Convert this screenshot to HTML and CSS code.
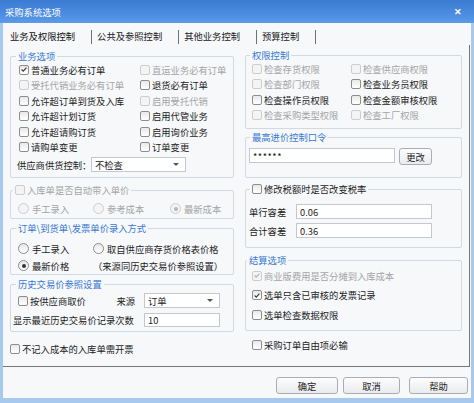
FILE: index.html
```html
<!DOCTYPE html>
<html lang="zh-CN">
<head>
<meta charset="utf-8">
<title>采购系统选项</title>
<link rel="stylesheet" href="styles.css">
</head>
<body>
<div class="window">
  <div class="titlebar"><span class="title">采购系统选项</span><span class="close">✕</span></div>
  <div class="client">
    <div class="tabs">
      <span class="tab first">业务及权限控制</span><span class="sep"></span>
      <span class="tab">公共及参照控制</span><span class="sep"></span>
      <span class="tab">其他业务控制</span><span class="sep"></span>
      <span class="tab">预算控制</span><span class="sep"></span>
    </div>
    <div class="panel">
      <div class="col col-left">
        <div class="group g1">
          <div class="legend">业务选项</div>
          <div class="grid g1-grid">
            <label class="chk"><span class="box"><svg viewBox="0 0 10 10"><path d="M2 5 L4.1 7.1 L8 2.8"/></svg></span>普通业务必有订单</label>
            <label class="chk dis"><span class="box"></span>直运业务必有订单</label>
            <label class="chk dis"><span class="box"></span>受托代销业务必有订单</label>
            <label class="chk"><span class="box"></span>退货必有订单</label>
            <label class="chk"><span class="box"></span>允许超订单到货及入库</label>
            <label class="chk dis"><span class="box"></span>启用受托代销</label>
            <label class="chk"><span class="box"></span>允许超计划订货</label>
            <label class="chk"><span class="box"></span>启用代管业务</label>
            <label class="chk"><span class="box"></span>允许超请购订货</label>
            <label class="chk"><span class="box"></span>启用询价业务</label>
            <label class="chk"><span class="box"></span>请购单变更</label>
            <label class="chk"><span class="box"></span>订单变更</label>
          </div>
          <div class="supply-row">
            <span class="supply-label">供应商供货控制：</span>
            <div class="select s-supply"><span>不检查</span><span class="arrow"></span></div>
          </div>
        </div>

        <div class="group g4">
          <div class="legend legend-chk dis"><span class="box"></span>入库单是否自动带入单价</div>
          <div class="grid radio-grid g4-grid">
            <label class="rad dis"><span class="dot"></span>手工录入</label>
            <label class="rad dis"><span class="dot"></span>参考成本</label>
            <label class="rad dis"><span class="dot on"></span>最新成本</label>
          </div>
        </div>

        <div class="group g5">
          <div class="legend">订单\到货单\发票单价录入方式</div>
          <div class="grid radio-grid g5-grid">
            <label class="rad"><span class="dot"></span>手工录入</label>
            <label class="rad"><span class="dot"></span>取自供应商存货价格表价格</label>
            <label class="rad"><span class="dot on"></span>最新价格</label>
            <span class="note">（来源同历史交易价参照设置）</span>
          </div>
        </div>

        <div class="group g6">
          <div class="legend">历史交易价参照设置</div>
          <div class="g6-grid">
            <div class="g6-left">
              <label class="chk"><span class="box"></span>按供应商取价</label>
              <span>来源</span>
            </div>
            <div class="select s-src"><span>订单</span><span class="arrow"></span></div>
            <span class="g6-label">显示最近历史交易价记录次数</span>
            <div class="input s-count">10</div>
          </div>
        </div>

        <label class="chk solo solo-left"><span class="box"></span>不记入成本的入库单需开票</label>
      </div>

      <div class="col col-right">
        <div class="group g2">
          <div class="legend">权限控制</div>
          <div class="grid g2-grid">
            <label class="chk dis"><span class="box"></span>检查存货权限</label>
            <label class="chk dis"><span class="box"></span>检查供应商权限</label>
            <label class="chk dis"><span class="box"></span>检查部门权限</label>
            <label class="chk"><span class="box"></span>检查业务员权限</label>
            <label class="chk"><span class="box"></span>检查操作员权限</label>
            <label class="chk"><span class="box"></span>检查金额审核权限</label>
            <label class="chk dis"><span class="box"></span>检查采购类型权限</label>
            <label class="chk dis"><span class="box"></span>检查工厂权限</label>
          </div>
        </div>

        <div class="group g3">
          <div class="legend">最高进价控制口令</div>
          <div class="pwd-row">
            <div class="input pwd">******</div>
            <div class="btn small">更改</div>
          </div>
        </div>

        <div class="group g7">
          <div class="legend legend-chk"><span class="box"></span>修改税额时是否改变税率</div>
          <div class="tol-grid">
            <span>单行容差</span><div class="input tol">0.06</div>
            <span>合计容差</span><div class="input tol">0.36</div>
          </div>
        </div>

        <div class="group g8">
          <div class="legend legend-tight">结算选项</div>
          <div class="grid g8-grid">
            <label class="chk dis"><span class="box"><svg viewBox="0 0 10 10"><path d="M2 5 L4.1 7.1 L8 2.8"/></svg></span>商业版费用是否分摊到入库成本</label>
            <label class="chk"><span class="box"><svg viewBox="0 0 10 10"><path d="M2 5 L4.1 7.1 L8 2.8"/></svg></span>选单只含已审核的发票记录</label>
            <label class="chk"><span class="box"></span>选单检查数据权限</label>
          </div>
        </div>

        <label class="chk solo solo-right"><span class="box"></span>采购订单自由项必输</label>
      </div>
    </div>

    <div class="buttons">
      <div class="btn ok">确定</div>
      <div class="btn cancel">取消</div>
      <div class="btn help">帮助</div>
    </div>
  </div>
</div>
</body>
</html>
```

FILE: styles.css
```css
* { box-sizing: border-box; }
html, body { margin: 0; padding: 0; }
body {
  width: 474px;
  height: 403px;
  overflow: hidden;
  font-family: "Noto Sans CJK SC", "Noto Sans", sans-serif;
  font-size: 9.3px;
  color: #1c1c1c;
  background: #a8c9ef;
}
.window {
  width: 474px;
  height: 403px;
  display: flex;
  flex-direction: column;
  background: #a8c9ef;
}
.titlebar {
  height: 23px;
  flex: none;
  display: flex;
  align-items: center;
  justify-content: space-between;
  padding: 0 12px 0 5px;
  background: linear-gradient(#3b7bd4, #4a8adf 55%, #5c9be7);
  color: #fff;
}
.title { font-size: 9.3px; }
.close { font-size: 9px; font-weight: bold; }

.client {
  flex: 1;
  margin: 0 3px 5px 3px;
  background: #f6f8fa;
  display: flex;
  flex-direction: column;
}

.tabs {
  height: 22px;
  flex: none;
  padding: 4px 0 0 7px;
  display: flex;
  align-items: center;
  color: #222;
}
.tab { padding: 0 16px 0 5px; line-height: 14px; }
.tab.first { padding-left: 0; color: #111; }
.sep {
  width: 1px;
  height: 14px;
  margin-top: 2px;
  background: #707070;
}

.panel {
  height: 322px;
  width: 467px;
  flex: none;
  display: flex;
  gap: 11px;
  padding: 0 7px;
  border-right: 1px solid #767676;
  border-bottom: 1px solid #767676;
}
.col { display: flex; flex-direction: column; }
.col-left { width: 224px; }
.col-right { width: 217px; }

.group {
  border: 1px solid #d2d9e2;
  border-radius: 2px;
}
.legend {
  display: flex;
  align-items: center;
  gap: 2px;
  width: fit-content;
  height: 12px;
  line-height: 12px;
  margin: -7px 0 0 5px;
  padding: 0 2px;
  background: #f6f8fa;
  color: #3a78d2;
  white-space: nowrap;
}
.legend-chk { color: #1c1c1c; margin-left: 2px; }
.legend-chk.dis { color: #a5a5a5; }
.col-right .legend { margin-left: 4px; }
.col-right .legend-tight { margin-left: 1px; }

.grid { display: grid; }

.chk, .rad {
  display: flex;
  align-items: center;
  gap: 2px;
  white-space: nowrap;
}
.rad { gap: 3px; }
.dis { color: #a5a5a5; }

.box {
  flex: none;
  width: 10px;
  height: 10px;
  border: 1px solid #8d8d8d;
  border-radius: 2px;
  background: linear-gradient(#e9e9e9, #ffffff);
  display: flex;
  align-items: center;
  justify-content: center;
}
.box svg { width: 9px; height: 9px; }
.box path { fill: none; stroke: #3a3a3a; stroke-width: 1.4; }
.dis .box { border-color: #cdcdcd; background: #f4f4f4; }
.dis .box path { stroke: #b0b0b0; }

.dot {
  flex: none;
  width: 11px;
  height: 11px;
  border: 1px solid #8d8d8d;
  border-radius: 50%;
  background: linear-gradient(#e6e6e6, #ffffff);
  display: flex;
  align-items: center;
  justify-content: center;
}
.dot.on::after {
  content: "";
  width: 4px;
  height: 4px;
  border-radius: 50%;
  background: #333;
}
.dis .dot { border-color: #cdcdcd; background: #f4f4f4; }
.dis .dot.on::after { background: #b5b5b5; }

.select, .input {
  border: 1px solid #c3c8ce;
  background: #fff;
  display: flex;
  align-items: center;
  padding-left: 3px;
  color: #1c1c1c;
}
.select { justify-content: space-between; padding-right: 6px; }
.arrow {
  width: 0;
  height: 0;
  border-left: 3px solid transparent;
  border-right: 3px solid transparent;
  border-top: 3px solid #555;
}

.btn {
  display: flex;
  align-items: center;
  justify-content: center;
  border: 1px solid #a9aeb4;
  border-radius: 3px;
  background: linear-gradient(#fdfdfd, #e9ebee);
  color: #1c1c1c;
}

/* group 1 */
.g1 { margin-top: 11px; height: 122px; }
.g1-grid {
  grid-template-columns: 121px auto;
  grid-auto-rows: 15.5px;
  padding-left: 8px;
}
.supply-row {
  margin-top: 2px;
  padding-left: 6px;
  display: flex;
  align-items: center;
}
.supply-label { width: 74px; white-space: nowrap; }
.s-supply { width: 95px; height: 15px; }

/* group 4 */
.g4 { margin-top: 12px; height: 29px; }
.radio-grid { padding-left: 7px; }
.g4-grid {
  margin-top: 5px;
  grid-template-columns: 75px 77px auto;
  grid-auto-rows: 15px;
}

/* group 5 */
.g5 { margin-top: 9px; height: 47px; }
.g5-grid {
  margin-top: 6px;
  grid-template-columns: 75px auto;
  grid-auto-rows: 17px;
}
.note { display: flex; align-items: center; white-space: nowrap; }

/* group 6 */
.g6 { margin-top: 9px; height: 48px; }
.g6-grid {
  margin-top: 3px;
  padding-left: 2px;
  display: grid;
  grid-template-columns: 122px 76px;
  column-gap: 9px;
  row-gap: 5px;
  grid-template-rows: 15px 14px;
}
.g6-left {
  display: flex;
  align-items: center;
  justify-content: space-between;
  padding-left: 5px;
}
.g6-label { display: flex; align-items: center; white-space: nowrap; }
.s-src, .s-count { width: 76px; }

.solo { height: 14px; }
.solo-left { margin-top: 10px; }
.solo-right { margin-top: 7px; padding-left: 7px; }

/* group 2 */
.g2 { margin-top: 10px; height: 74px; }
.g2-grid {
  grid-template-columns: 99px auto;
  grid-auto-rows: 15.5px;
  padding-left: 6px;
}

/* group 3 */
.g3 { margin-top: 8px; height: 41px; }
.pwd-row {
  margin-top: 5px;
  padding-left: 3px;
  display: flex;
  align-items: flex-start;
  gap: 4px;
}
.pwd { width: 146px; height: 15px; letter-spacing: 0.5px; }
.btn.small { width: 33px; height: 17px; }

/* group 7 */
.g7 { margin-top: 11px; height: 59px; }
.tol-grid {
  margin-top: 9px;
  padding-left: 3px;
  display: grid;
  grid-template-columns: 47px 136px;
  grid-template-rows: 15px 15px;
  row-gap: 4px;
  align-items: center;
}
.tol { height: 15px; }

/* group 8 */
.g8 { margin-top: 12px; height: 71px; }
.g8-grid {
  grid-auto-rows: 19.5px;
  padding-left: 6px;
}

/* buttons */
.buttons {
  margin-top: 10px;
  padding-right: 3px;
  display: flex;
  justify-content: flex-end;
}
.buttons .btn { height: 17px; }
.btn.ok { width: 62px; margin-right: 5px; }
.btn.cancel { width: 57px; margin-right: 9px; }
.btn.help { width: 59px; }
```
